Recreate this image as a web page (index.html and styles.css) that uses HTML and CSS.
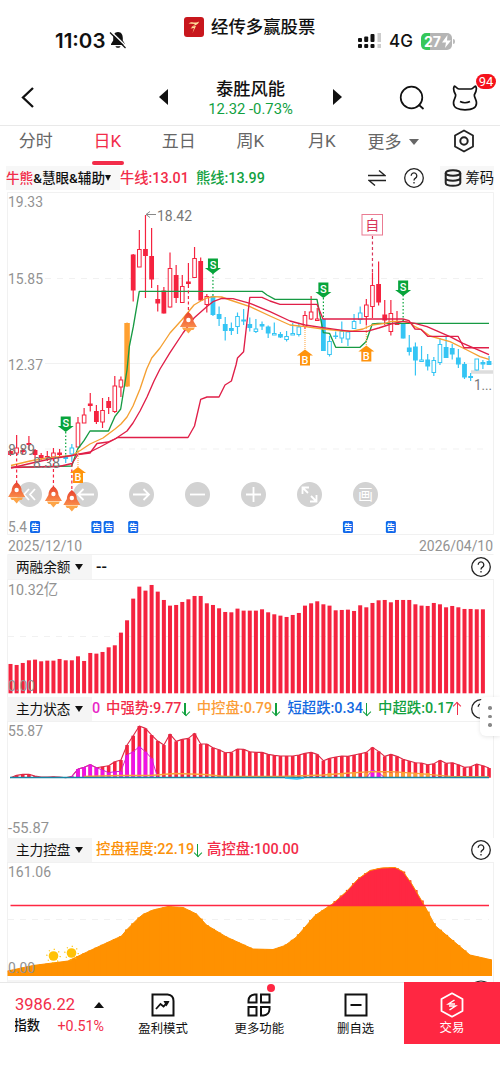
FILE: index.html
```html
<!DOCTYPE html>
<html lang="zh-CN">
<head>
    <meta charset="UTF-8">
    <meta name="viewport" content="width=device-width, initial-scale=1.0">
    <title>泰胜风能</title>
    <link rel="stylesheet" href="styles.css">
</head>
<body>
    <svg width="0" height="0" class="defs">
        <defs>
            <linearGradient id="fire" x1="0" y1="0" x2="0" y2="1">
                <stop offset="0" stop-color="#e8402f"/>
                <stop offset="1" stop-color="#f98a48"/>
            </linearGradient>
            <g id="rocket">
                <path d="M0-11 C4-8 5-5 5-2 L8.500 4 H-8.500 L-5-2 C-5-5-4-8 0-11Z" fill="url(#fire)"/>
                <path d="M-6.500 4.500H6.500L5 7H3L0 10.500L-3 7H-5Z" fill="#fda447"/>
                <circle cy="-3" r="2.200" fill="#fff"/>
            </g>
            <g id="sell">
                <path d="M-5-7.500H5V2H8L0 8L-8 2H-5Z" fill="#07a43b"/>
                <text y="2.500" class="mark">S</text>
            </g>
            <g id="buy">
                <path d="M-5 8H5V-2H8L0-8L-8-2H-5Z" fill="#ff930d"/>
                <text y="6" class="mark">B</text>
            </g>
            <g id="notice">
                <rect x="-5" y="-6" width="10" height="12" rx="1.500" fill="#1268ea"/>
                <text y="3.200" class="notice-text">告</text>
            </g>
            <g id="sun">
                <circle r="4.800" fill="#ffc208"/>
                <circle r="6.700" fill="none" stroke="#ffc208" stroke-width="1.200" stroke-dasharray="1.200 4.060"/>
            </g>
            <g id="help">
                <circle cx="11" cy="11" r="9.300" fill="none" stroke="#222" stroke-width="1.300"/>
                <path d="M8.200 8.700a2.800 2.800 0 1 1 4.300 2.400c-1 .7-1.500 1.100-1.500 2.300M11 15v1.500" fill="none" stroke="#222" stroke-width="1.300"/>
            </g>
        </defs>
    </svg>

    <!-- Status bar -->
    <div class="status-bar">
        <div class="clock">11:03
            <svg width="18" height="18" viewBox="0 0 18 18">
                <path d="M9 1C5.500 1 4.200 4 4.200 7v2.500L2 13v1h14v-1l-2.200-3.500V7C13.800 4 12.500 1 9 1ZM6.500 15.200h5C11 17.200 7 17.200 6.500 15.200Z" fill="#111"/>
                <path d="M2.500 1L18 16" stroke="#fff" stroke-width="1.500"/>
                <path d="M1 1.500L16.500 17" stroke="#111" stroke-width="1.300"/>
            </svg>
        </div>
        <div class="app-name">
            <svg width="20" height="20" viewBox="0 0 20 20">
                <rect width="20" height="20" rx="3" fill="#c8171d"/>
                <path d="M4.500 6.500C8 3.500 11 7 15 4.500C14.500 8 9 9 7.500 9.500L12 9L8.500 16L10 11L6.500 11.500L11 7Z" fill="#ffe09a"/>
            </svg>
            <span>经传多赢股票</span>
        </div>
        <div class="signal">
            <svg width="26" height="18" viewBox="0 0 26 18">
                <g fill="#111">
                    <rect x="1" y="6" width="4" height="4" rx="1"/><rect x="7.200" y="4.500" width="4" height="5.500" rx="1"/><rect x="13.500" y="2" width="4" height="8" rx="1"/>
                    <rect x="1" y="12" width="4" height="4" rx="1"/><rect x="7.200" y="12" width="4" height="4" rx="1"/><rect x="13.500" y="12" width="4" height="4" rx="1"/>
                </g>
                <path d="M20.500 1h3.500v9h-3.500zM20.500 12h3.500v4h-3.500z" fill="#ccc"/>
            </svg>
            <span class="network">4G</span>
            <div class="battery">27<svg width="9" height="13" viewBox="0 0 9 13"><path d="M5.500 0L0 7.500H4L3 13L9 5.500H5Z" fill="#fff"/></svg></div>
        </div>
    </div>

    <!-- Stock header -->
    <div class="header">
        <svg class="back" width="14" height="22" viewBox="0 0 14 22"><path d="M12 2L2 11.500L12 21" fill="none" stroke="#111" stroke-width="2.300"/></svg>
        <svg class="prev" width="9" height="16" viewBox="0 0 9 16"><path d="M9 0V16L0 8Z" fill="#111"/></svg>
        <div class="stock">
            <div class="stock-name">泰胜风能</div>
            <div class="stock-price">12.32 -0.73%</div>
        </div>
        <svg class="next" width="9" height="16" viewBox="0 0 9 16"><path d="M0 0V16L9 8Z" fill="#111"/></svg>
        <svg class="search" width="26" height="26" viewBox="0 0 26 26"><circle cx="12.500" cy="12.500" r="10.800" fill="none" stroke="#111" stroke-width="1.700"/><path d="M19.500 19.500L24.500 24" stroke="#111" stroke-width="1.700"/></svg>
        <div class="robot">
            <svg width="26" height="27" viewBox="0 0 26 27"><path d="M3.500 10.500C1.500 7 1 4 2.500 2C4 2 4.500 5 7 5H19C21.500 5 22 2 23.500 2C25 4 24.500 7 22.500 10.500C21.500 12.500 24.500 15 24.500 19C24.500 24 19 25.800 13 25.800S1.500 24 1.500 19C1.500 15 4.500 12.500 3.500 10.500ZM8 17.500C11 19 15 19 18 17.500" fill="none" stroke="#111" stroke-width="1.700" stroke-linejoin="round"/></svg>
            <span class="badge">94</span>
        </div>
    </div>

    <!-- Period tabs -->
    <div class="tabs">
        <div class="tab">分时</div>
        <div class="tab active">日K</div>
        <div class="tab">五日</div>
        <div class="tab">周K</div>
        <div class="tab">月K</div>
        <div class="tab more">更多<i class="caret"></i></div>
        <svg class="settings" width="22" height="24" viewBox="0 0 22 24"><path d="M11 1.500L20 6.500V17.500L11 22.500L2 17.500V6.500Z" fill="none" stroke="#222" stroke-width="1.800" stroke-linejoin="round"/><circle cx="11" cy="12" r="3.700" fill="none" stroke="#222" stroke-width="2"/></svg>
    </div>

    <!-- Main chart -->
    <div class="main-legend">
        <div class="main-title"><span class="red">牛熊</span>&amp;慧眼&amp;辅助<i class="caret"></i></div>
        <span class="red bull">牛线:13.01</span>
        <span class="green">熊线:13.99</span>
        <svg class="swap" width="18" height="16" viewBox="0 0 18 16"><path d="M0 5.500H17L11 .5M18 10.500H1L7 15.500" fill="none" stroke="#222" stroke-width="1.400"/></svg>
        <svg class="main-help" width="22" height="22"><use href="#help"/></svg>
        <div class="chips">
            <svg width="18" height="18" viewBox="0 0 18 18"><g fill="none" stroke="#222" stroke-width="2"><ellipse cx="9" cy="4" rx="7.300" ry="2.800"/><path d="M1.700 4V14C1.700 17.700 16.300 17.700 16.300 14V4M1.700 9C1.700 12.500 16.300 12.500 16.300 9"/></g></svg>
            筹码
        </div>
    </div>
    <div class="main-chart">
        <svg width="500" height="365" viewBox="0 190 500 365">
            <g class="grid">
                <path d="M7.500 192.500H493.500V534.500H7.500ZM7.500 554.500H493.500M45 363.500H493"/>
                <path d="M45 278.500H489M45 449H489" class="dash"/>
            </g>
            <text x="8" y="207" textLength="35" lengthAdjust="spacingAndGlyphs" class="axis">19.33</text>
            <text x="8" y="284" textLength="35" lengthAdjust="spacingAndGlyphs" class="axis">15.85</text>
            <text x="8" y="370" textLength="35" lengthAdjust="spacingAndGlyphs" class="axis">12.37</text>
            <text x="8" y="532" textLength="19" lengthAdjust="spacingAndGlyphs" class="axis">5.4</text>
            <text x="8" y="551" textLength="74" lengthAdjust="spacingAndGlyphs" class="axis">2025/12/10</text>
            <text x="419" y="551" textLength="74" lengthAdjust="spacingAndGlyphs" class="axis">2026/04/10</text>
            <text x="157" y="221" textLength="35" lengthAdjust="spacingAndGlyphs" class="axis dark">18.42</text>
            <path d="M156 214.500H146M150 211.500L146 214.500L150 217.500" fill="none" stroke="#888"/>
            <path d="M471 372H493" stroke="#ddd" stroke-width="3.500"/>
            <g id="candles"></g>
            <g id="lines"></g>
            <text x="8" y="455" textLength="27" lengthAdjust="spacingAndGlyphs" class="axis dark">8.89</text>
            <text x="33" y="468" textLength="27" lengthAdjust="spacingAndGlyphs" class="axis dark">8.38</text>
            <text x="474" y="390" textLength="18" lengthAdjust="spacingAndGlyphs" class="axis dark">1...</text>
            <g id="stems"></g>
            <rect x="362" y="214.500" width="20.500" height="20.500" fill="#fff" stroke="#ea7b92"/>
            <text x="372.300" y="230" class="self-text">自</text>
        </svg>
        <div class="tools">
            <svg width="25" height="25"><circle cx="12.500" cy="12.500" r="12.500"/><path d="M12 7L7 12.500L12 18M18 7L13 12.500L18 18"/></svg>
            <svg width="25" height="25"><circle cx="12.500" cy="12.500" r="12.500"/><path d="M21 12.500H5M10.500 7L5 12.500L10.500 18"/></svg>
            <svg width="25" height="25"><circle cx="12.500" cy="12.500" r="12.500"/><path d="M4 12.500H20M14.500 7L20 12.500L14.500 18"/></svg>
            <svg width="25" height="25"><circle cx="12.500" cy="12.500" r="12.500"/><path d="M5 12.500H20"/></svg>
            <svg width="25" height="25"><circle cx="12.500" cy="12.500" r="12.500"/><path d="M5 12.500H20M12.500 5V20"/></svg>
            <svg width="25" height="25"><circle cx="12.500" cy="12.500" r="12.500"/><path d="M5.500 12V5.500H12M5.500 5.500L11 11M19.500 13V19.500H13M19.500 19.500L14 14"/></svg>
            <svg width="25" height="25"><circle cx="12.500" cy="12.500" r="12.500"/><text x="12.500" y="18" class="draw-text">画</text></svg>
        </div>
        <svg class="overlay" width="500" height="365" viewBox="0 190 500 365"><g id="marks"></g></svg>
    </div>

    <!-- Indicator panels -->
    <div class="panel">
        <div class="panel-head">
            <div class="panel-title">两融余额<i class="caret"></i></div>
            <div class="values"><span class="none">--</span></div>
            <svg class="help" width="22" height="22"><use href="#help"/></svg>
        </div>
        <svg class="chart" width="500" height="118" viewBox="0 579 500 118">
            <path d="M7.500 579.500H493.500M7.500 579V697M493.500 579V697" class="grid"/>
            <path d="M8 636.500H489" class="grid dash"/>
            <text x="8" y="594.500" textLength="50" lengthAdjust="spacingAndGlyphs" class="axis">10.32亿</text>
            <g id="margin"></g>
            <text x="8" y="691" textLength="27" lengthAdjust="spacingAndGlyphs" class="axis">0.00</text>
        </svg>
    </div>

    <div class="panel">
        <div class="panel-head">
            <div class="panel-title">主力状态<i class="caret"></i></div>
            <div class="values state-values">
                <span class="magenta">0</span>
                <span class="red">中强势:9.77<b class="arrow down"></b></span>
                <span class="orange">中控盘:0.79<b class="arrow down"></b></span>
                <span class="blue">短超跌:0.34<b class="arrow down"></b></span>
                <span class="green">中超跌:0.17<b class="arrow up"></b></span>
            </div>
            <svg class="help" width="22" height="22"><use href="#help"/></svg>
            <div class="side-handle"><i></i><i></i><i></i></div>
        </div>
        <svg class="chart" width="500" height="117" viewBox="0 721 500 117">
            <path d="M7.500 721.500H493.500M7.500 721V838M493.500 721V838" class="grid"/>
            <text x="8" y="736" textLength="35" lengthAdjust="spacingAndGlyphs" class="axis">55.87</text>
            <text x="8" y="832.500" textLength="41" lengthAdjust="spacingAndGlyphs" class="axis">-55.87</text>
            <g id="state"></g>
        </svg>
    </div>

    <div class="panel">
        <div class="panel-head">
            <div class="panel-title">主力控盘<i class="caret"></i></div>
            <div class="values">
                <span class="amber">控盘程度:22.19<b class="arrow down"></b></span>
                <span class="red">高控盘:100.00</span>
            </div>
            <svg class="help" width="22" height="22"><use href="#help"/></svg>
        </div>
        <svg class="chart" width="500" height="120" viewBox="0 862 500 120">
            <path d="M7.500 862.500H493.500M7.500 862V982M493.500 862V982" class="grid"/>
            <path d="M8 919.500H489" class="grid dash"/>
            <text x="8" y="877" textLength="43" lengthAdjust="spacingAndGlyphs" class="axis">161.06</text>
            <g id="control"></g>
            <path d="M10.500 905.500H489" stroke="#ff2742" stroke-width="1.400"/>
            <use href="#sun" x="53.500" y="956"/>
            <use href="#sun" x="71.500" y="953"/>
            <text x="8" y="973" textLength="27" lengthAdjust="spacingAndGlyphs" class="axis">0.00</text>
            <path d="M7.500 980H90V982H7.500Z" fill="#f5f5f5"/>
            <path d="M475 982.500Q481 979.500 487 982.500" fill="none" stroke="#222" stroke-width="1.200"/>
        </svg>
    </div>

    <!-- Bottom bar -->
    <div class="bottom-bar">
        <div class="index">
            <div class="index-row"><span class="index-value">3986.22</span><i class="caret-up"></i></div>
            <div class="index-row"><span class="index-name"><span>指数</span></span><span class="index-change">+0.51%</span></div>
        </div>
        <div class="action">
            <svg width="24" height="24" viewBox="0 0 24 24"><g fill="none" stroke="#111" stroke-width="2"><path d="M1.500 1.500H16.500Q22.500 2 22.500 8V22.500H1.500Z"/><path d="M5 16L9.500 11L12.500 13.500L17 9" stroke-width="1.800"/></g><path d="M12.500 8H18.500L15.500 13.500Z" fill="#111"/></svg>
            <span>盈利模式</span>
        </div>
        <div class="action">
            <svg width="24" height="24" viewBox="0 0 24 24"><g fill="none" stroke="#111" stroke-width="2"><path d="M9.500 1.500V9.500H1.500V7.500Q2 2 7.500 1.500ZM14 1.500H22.500V9.500H14ZM1.500 14H9.500V22.500H1.500ZM14 14H22.500V16.500Q22 22 16.500 22.500H14Z"/></g></svg>
            <span>更多功能</span>
            <i class="dot"></i>
        </div>
        <div class="action">
            <svg width="24" height="24" viewBox="0 0 24 24"><path d="M1.500 1.500H22.500V22.500H1.500ZM6.500 12H17.500" fill="none" stroke="#111" stroke-width="2"/></svg>
            <span>删自选</span>
        </div>
        <div class="action trade">
            <svg width="24" height="26" viewBox="0 0 24 26"><path d="M12 1.300L22.500 7V19L12 24.700L1.500 19V7Z" fill="none" stroke="#fff" stroke-width="1.800" stroke-linejoin="round"/><path d="M14.500 8L8.500 12H15M9.500 18L15.500 14H9" fill="none" stroke="#fff" stroke-width="1.500"/></svg>
            <span>交易</span>
        </div>
    </div>

    <script src="charts.js"></script>
</body>
</html>
```

FILE: styles.css
```css
* {
    box-sizing: border-box;
}
body {
    margin: 0;
    width: 500px;
    height: 1087px;
    overflow: hidden;
    background: #fff;
    color: #111;
    font-family: Roboto, "Noto Sans CJK SC", sans-serif;
}
svg {
    display: block;
    flex: none;
}
.defs {
    position: absolute;
}
.red { color: #f22c49; }
.green { color: #12a13f; }
.orange { color: #fb9d38; }
.amber { color: #fb9109; }
.blue { color: #1268e0; }
.magenta { color: #e827c6; }
.caret {
    border: 4px solid transparent;
    border-top: 6px solid #111;
    border-bottom: 0;
}

/* Status bar */
.status-bar {
    height: 68px;
    display: flex;
    padding: 13px 43px 0 55px;
}
.clock {
    width: 129px;
    padding-top: 16px;
    display: flex;
    gap: 4px;
    font: 600 20.5px/24px Inter, sans-serif;
}
.clock svg {
    margin-top: 2px;
}
.app-name {
    width: 173px;
    height: 28px;
    display: flex;
    align-items: center;
    gap: 7px;
    font-size: 17.4px;
    line-height: 28px;
    font-weight: 500;
    white-space: nowrap;
}
.signal {
    display: flex;
    height: 24px;
    margin-top: 16px;
    align-items: center;
}
.network {
    width: 32px;
    margin-left: 6px;
    font: 500 17px/24px Inter, sans-serif;
}
.battery {
    position: relative;
    width: 31px;
    height: 17px;
    padding-left: 3px;
    display: flex;
    align-items: center;
    gap: 1px;
    border-radius: 5px;
    color: #fff;
    background: linear-gradient(90deg, #35c759 9px, #b5b5b5 9px);
    font: 700 14px/17px Inter, sans-serif;
}
.battery::after {
    content: "";
    position: absolute;
    right: -3px;
    top: 6px;
    width: 2px;
    height: 5px;
    border-radius: 0 2px 2px 0;
    background: #bbb;
}

/* Stock header */
.header {
    height: 58px;
    display: flex;
    border-bottom: 1px solid #e9e9e9;
}
.back {
    margin: 18px 0 0 21px;
}
.prev {
    margin: 21px 0 0 124px;
}
.stock {
    width: 165px;
    text-align: center;
}
.stock-name {
    margin-top: 8px;
    font-size: 17.3px;
    line-height: 26px;
    font-weight: 500;
}
.stock-price {
    font-size: 14.8px;
    line-height: 15px;
    color: #12a13f;
}
.next {
    margin-top: 21px;
}
.search {
    margin: 17px 0 0 57px;
}
.robot {
    position: relative;
    margin: 16px 0 0 27px;
}
.badge {
    position: absolute;
    left: 24px;
    top: -10px;
    width: 20px;
    border-radius: 8px;
    background: #f5121b;
    color: #fff;
    font-size: 13px;
    line-height: 15px;
    text-align: center;
}

/* Tabs */
.tabs {
    height: 39px;
    display: flex;
}
.tab {
    position: relative;
    width: 71.5px;
    text-align: center;
    color: #666;
    font-size: 17px;
    line-height: 31px;
}
.tab.active {
    color: #f22c49;
}
.tab.active::after {
    content: "";
    position: absolute;
    left: 20px;
    bottom: 0;
    width: 32px;
    height: 4px;
    border-radius: 2px;
    background: #f22c49;
}
.tab.more {
    width: 84px;
    padding-left: 10px;
    display: flex;
    align-items: center;
    height: 32px;
}
.more .caret {
    margin-left: 7px;
    border-width: 6px 5px 0;
    border-top-color: #666;
}
.settings {
    margin: 3px 0 0 11px;
}

/* Main chart */
.main-legend {
    height: 25px;
    padding-left: 6px;
    display: flex;
    align-items: center;
    font-size: 14.3px;
    line-height: 24px;
    white-space: nowrap;
}
.main-title {
    width: 114px;
    display: flex;
    align-items: center;
    font-size: 13.6px;
    font-weight: 500;
    background: #f7f7f7;
}
.main-title .caret {
    border-width: 6px 3.5px 0;
}
.bull {
    width: 76px;
}
.bull, .bull + .green {
    font-weight: 500;
}
.swap {
    position: absolute;
    left: 368px;
}
.main-help {
    position: absolute;
    left: 403px;
}
.chips {
    margin-left: auto;
    margin-right: 6px;
    padding-left: 4px;
    height: 24px;
    display: flex;
    align-items: center;
    gap: 3px;
    background: #f7f7f7;
}
.main-chart {
    position: relative;
}
.overlay {
    position: absolute;
    left: 0;
    top: 0;
}
.grid {
    fill: none;
    stroke: #f1f1f1;
}
.dash {
    stroke-dasharray: 6 6;
}
.axis {
    font-size: 15.5px;
    fill: #929292;
}
.axis.dark {
    fill: #777;
}
.mark {
    font: 500 11px Roboto, sans-serif;
    text-anchor: middle;
    fill: #fff;
}
.notice-text {
    font-size: 8.5px;
    font-weight: 700;
    text-anchor: middle;
    fill: #fff;
}
.self-text {
    font-size: 14px;
    text-anchor: middle;
    fill: #d8365a;
}
.tools {
    position: absolute;
    left: 17px;
    top: 292px;
    display: flex;
    gap: 31px;
    opacity: 0.75;
}
.tools circle {
    fill: #c3c3c3;
}
.tools path {
    fill: none;
    stroke: #fff;
    stroke-width: 1.8;
}
.draw-text {
    fill: #fff;
    font-size: 15px;
    text-anchor: middle;
}

/* Panels */
.panel-head {
    position: relative;
    height: 24px;
    padding-left: 7px;
    display: flex;
    font-size: 14.4px;
    line-height: 24px;
    white-space: nowrap;
}
.panel-title {
    width: 85px;
    padding-left: 9px;
    display: flex;
    align-items: center;
    gap: 5px;
    background: #f5f5f5;
    font-size: 13.6px;
}
.values {
    display: flex;
    gap: 6px;
    padding-left: 4px;
    padding-top: 1px;
    font-weight: 500;
}
.none {
    font-size: 16px;
}
.state-values {
    padding-left: 0;
}
.state-values span {
    width: 84.7px;
}
.state-values .magenta {
    width: 8px;
}
.values span {
    display: flex;
    align-items: center;
    height: 22px;
}
.arrow {
    position: relative;
    width: 7px;
    height: 12px;
    margin-left: 0;
}
.arrow::before {
    content: "";
    position: absolute;
    left: 2.8px;
    top: 0;
    width: 1.5px;
    height: 12px;
    background: currentColor;
}
.arrow::after {
    content: "";
    position: absolute;
    left: 1px;
    top: 6px;
    width: 5px;
    height: 5px;
    border: solid currentColor;
    border-width: 0 1.5px 1.5px 0;
    transform: rotate(45deg);
}
.arrow.down {
    color: #12a13f;
}
.arrow.up {
    color: #f22c49;
    transform: rotate(180deg);
}
.help {
    position: absolute;
    left: 470px;
    top: 1px;
}
.side-handle {
    position: absolute;
    left: 480px;
    top: 0;
    z-index: 1;
    width: 20px;
    height: 39px;
    border-radius: 6px 0 0 6px;
    background: #fff;
    box-shadow: 0 1px 4px rgba(0, 0, 0, 0.1);
    display: flex;
    flex-direction: column;
    align-items: center;
    justify-content: center;
    gap: 5px;
}
.side-handle i {
    width: 3.5px;
    height: 3.5px;
    border-radius: 50%;
    background: #888;
}

/* Bottom bar */
.bottom-bar {
    height: 62px;
    display: flex;
    border-top: 1px solid #e8e8e8;
}
.index {
    width: 115px;
    padding: 11px 11px 0 15px;
}
.index-row {
    display: flex;
    justify-content: space-between;
    align-items: center;
    height: 21px;
}
.index-value {
    font-size: 16.5px;
    color: #f22c49;
}
.caret-up {
    border: 5px solid transparent;
    border-top: 0;
    border-bottom: 6px solid #111;
}
.index-name {
    width: 25px;
    overflow: hidden;
    display: flex;
    justify-content: flex-end;
    white-space: nowrap;
    font-size: 13.3px;
    line-height: 21px;
    font-weight: 500;
}
.index-change {
    color: #f22c49;
    font-size: 14.3px;
}
.action {
    position: relative;
    width: 96.3px;
    padding-top: 10px;
    display: flex;
    flex-direction: column;
    align-items: center;
    font-size: 12.4px;
    line-height: 23px;
}
.dot {
    position: absolute;
    left: 56px;
    top: 1px;
    width: 8px;
    height: 8px;
    border-radius: 50%;
    background: #ff2742;
}
.trade {
    height: 62px;
    margin-top: -1px;
    background: #ff2742;
    color: #fff;
}
.trade span {
    line-height: 20px;
}
```

FILE: charts.js
```js
const RED = '#f5233f';
const BLUE = '#35c5f4';
const x = i => 10.5 + i * 6.135;

function draw(id, markup) {
    document.getElementById(id).innerHTML = markup;
}

function line(points, color, width = 1.35) {
    return `<polyline points="${points}" fill="none" stroke="${color}" stroke-width="${width}" stroke-linejoin="round"/>`;
}

// [high, low, body top, body bottom, style]
// r / c = filled red / cyan, R / C = hollow, o = filled orange
const candles = [
    [450, 456, 451, 455, 'r'], [435, 453, 448, 453, 'R'], [448, 454, 450, 452, 'r'], [436, 450, 443, 445, 'r'],
    [449, 458, 450, 455, 'r'], [453, 460, 455, 458, 'r'], [451, 461, 456, 457.5, 'r'], [448, 459, 453, 457, 'R'],
    [449, 457, 452.5, 455, 'r'], [455, 463, 457, 459, 'c'], [444, 462, 448, 454, 'C'], [417, 447, 423, 447, 'R'],
    [408, 423, 415, 423, 'R'], [393, 411.5, 403.5, 406, 'r'], [405, 424, 411, 422, 'r'], [398, 428, 410.5, 422, 'R'],
    [397, 414, 401, 408, 'r'], [376, 413, 386, 411.5, 'R'], [376.5, 397, 380, 387, 'R'], [322.5, 387, 323, 386.5, 'o'],
    [254, 301.5, 254.5, 290.5, 'r'], [230, 267, 249.5, 267, 'R'], [215, 298, 249, 256, 'r'], [228, 288, 256, 279.5, 'r'],
    [285, 311.5, 299, 303.5, 'r'], [287, 313.5, 290.5, 313.5, 'r'], [252.5, 307.5, 268.5, 307, 'R'], [265, 303, 275, 298, 'r'],
    [275, 302.5, 286.5, 302.5, 'R'], [263, 285, 281.5, 284, 'r'], [247, 278, 258.5, 277.5, 'R'], [257.5, 301, 261, 300.5, 'r'],
    [294, 312.5, 296.5, 304.5, 'R'], [295, 316, 296, 315, 'c'], [306.5, 326, 314, 319, 'c'], [317, 340.5, 324, 331, 'c'],
    [322.5, 335, 328, 331, 'c'], [312.5, 334, 316.5, 326.5, 'C'], [309, 325, 319.5, 321.5, 'c'], [317.5, 331.5, 324, 328, 'c'],
    [319, 333, 329, 331.5, 'C'], [321.5, 330, 324, 326.5, 'c'], [325.5, 338, 326.5, 333.5, 'c'], [322.5, 335, 333.5, 335, 'C'],
    [332, 338, 334, 337.5, 'c'], [331, 341.5, 336.5, 339.5, 'C'], [323, 335, 333.5, 335, 'C'], [323, 336.5, 327, 334.5, 'C'],
    [311, 329, 315.5, 326.5, 'R'], [296, 320, 312, 319, 'R'], [308, 321, 319, 320.5, 'R'], [319, 351, 319, 351, 'c'],
    [336, 356.5, 341.5, 354.5, 'C'], [331.5, 339, 335.5, 337, 'c'], [321.5, 343, 331.5, 338, 'C'], [330, 346, 332, 339, 'C'],
    [314, 329, 321.5, 328.5, 'C'], [306.5, 324, 313, 319.5, 'C'], [299, 325.5, 305, 316.5, 'R'], [272.5, 318, 285.5, 306.5, 'R'],
    [261.5, 305.5, 284, 302.5, 'r'], [300, 325, 314.5, 320.5, 'r'], [300, 335.5, 313.5, 331.5, 'R'], [311, 325, 323, 325, 'r'],
    [323.5, 338.5, 323.5, 338.5, 'c'], [335, 355.5, 347.5, 352, 'c'], [342.5, 375.5, 346.5, 360.5, 'c'], [346, 361.5, 360, 361.5, 'C'],
    [354, 370.5, 359.5, 366.5, 'c'], [357, 376, 360.5, 372.5, 'C'], [338, 365, 344.5, 362.5, 'C'], [336.5, 358, 347, 358, 'c'],
    [344, 359.5, 348, 354.5, 'c'], [349, 368, 357.5, 364.5, 'c'], [362, 379, 364, 377.5, 'c'], [373, 381, 376, 378, 'c'],
    [359, 370.5, 359, 370, 'C'], [360, 369, 362, 364.5, 'c'], [356, 365, 361, 365, 'c']
];

draw('candles', candles.map(([high, low, top, bottom, type], i) => {
    const color = type === 'o' ? '#ffa031' : type.toLowerCase() === 'r' ? RED : BLUE;
    const hollow = type === 'R' || type === 'C';
    const w = hollow ? 3.6 : type === 'o' ? 5.5 : 4.8;
    return `<path d="M${x(i)} ${high}V${low}" stroke="${color}" stroke-width="1.2"/>
        <rect x="${x(i) - w / 2}" y="${top}" width="${w}" height="${bottom - top}" fill="${hollow ? '#fff' : color}" stroke="${hollow ? color : 'none'}"/>`;
}).join(''));

const green = '11,467.3 71.7,466 77.7,449 84,440.7 90,431 108.5,431 114.8,416.7 120.7,409 127,370 129.3,346.7 133.3,326.7 139.3,291.3 262,291.3 267,295 275,299.3 317,299.3 323.3,332.7 329.5,333.3 335.7,347.3 360,347.3 366,341.7 372.3,324 378,323.3 489,323.3';
const orange = '11,465.5 30,461 47,458 72,455.5 81,450 90,444 103,438 115,429 121,424 127,417 133,406 140,389 146.7,369 151.7,358 160,348 170,333 181.7,320 194,305 200.7,301 206.7,298 213,296.7 221.7,297 230,300 250,306.7 270,316 290,325 305,326.7 323,329 343,331 353,331 363,329 372,325 385,323.3 391,321.3 403,321.3 410,322.7 415,326.7 421.7,330 430,336 450,341.7 467,350 480,356.7 489,359.3';
const average = '11,468 30,463.5 50,459 72,455.5 90,452 100,447 115,439 127,431 133,423 140,411 147,397 154,381 160,369 170,352.7 183,333 194,318 206.7,306.7 213,301.7 221.7,298.3 233,298.7 250,303.3 270,311.7 290,321 305,325 323,327.7 350,331.3 367,331.3 378.7,328 385,326 391,324 403,321.3 415,323.3 427,326.7 450,336.7 463,343.3 489,354.7';
const steps = '11,467.5 59,466.5 72,463.5 78,454.5 90,453 97,443.5 108,442 118,437.5 188,437.5 194.5,426 200.7,399.3 207,397 219,397 225,385 231.4,381 236,365 237.5,358 243.6,351.7 249.8,297.3 262,297.3 270,301 280,304.3 317,304.3 323,319 403,319 409,320.7 415,329 421,329.3 427.7,336.3 458,336.3 464,347.7 489,347.7';

draw('lines', line(green, '#179a43') + line(orange, '#f5a032') + line(average, '#e01f48') + line(steps, '#e01f48'));

const stems = [
    [1, 453, 485, RED], [7, 458, 488, RED], [10, 464, 492, RED], [29, 285, 315, RED], [59, 236, 272, '#d8365a'],
    [9, 432, 457, '#07a43b'], [33, 273, 296, '#07a43b'], [51, 298, 319, '#07a43b'], [64, 295, 323, '#07a43b'],
    [11, 450, 468, '#ffb35d'], [48, 330, 350, '#ffb35d'], [58, 326, 346, '#ffb35d']
];
const dash = color => color === '#07a43b' ? '1.5 2' : color === '#ffb35d' ? '1 1' : '3 2.5';
draw('stems', stems.map(([i, top, bottom, color]) =>
    `<path d="M${x(i)} ${top}V${bottom}" stroke="${color}" stroke-width="1.2" stroke-dasharray="${dash(color)}"/>`
).join(''));

const marks = [
    ['rocket', 1, 493], ['rocket', 7, 497], ['rocket', 10, 501], ['rocket', 29, 323],
    ['sell', 9, 424], ['sell', 33, 266], ['sell', 51, 290], ['sell', 64, 288],
    ['buy', 11, 475], ['buy', 48, 357.5], ['buy', 58, 353.5],
    ['notice', 4, 527], ['notice', 14, 527], ['notice', 16, 527], ['notice', 20, 527], ['notice', 55, 527], ['notice', 62, 527]
];
draw('marks', marks.map(([name, i, y]) => `<use href="#${name}" x="${x(i)}" y="${y}"/>`).join(''));

// Margin balance
const margin = [
    88, 85, 91, 99, 101, 96, 98, 98, 103, 99, 99, 111, 97, 121, 119, 124, 138, 144, 182, 219,
    284, 320, 308, 325, 305, 280, 263, 265, 274, 282, 292, 292, 270, 265, 255, 244, 243, 254, 248, 248,
    248, 252, 243, 237, 233, 229, 235, 241, 263, 270, 276, 267, 263, 249, 250, 251, 247, 264, 258, 271,
    279, 280, 273, 280, 280, 280, 267, 263, 262, 271, 267, 258, 262, 258, 253, 253, 252, 252
];
draw('margin', margin.map((v, i) =>
    `<rect x="${x(i) - 2}" y="${693.3 - v / 3}" width="4" height="${v / 3}" fill="${RED}"/>`
).join(''));

// Main force state
const strong = [
    0, 7, 10, 10, 5, 2, 2, 3, 2, 0, 4, 26, 31, 39, 30, 33, 36, 48, 53, 98,
    126, 155, 148, 128, 110, 98, 131, 109, 115, 118, 133, 101, 101, 90, 84, 75, 76, 86, 85, 78,
    76, 76, 70, 67, 65, 65, 65, 68, 73, 76, 70, 51, 58, 62, 65, 64, 68, 72, 76, 91,
    79, 64, 70, 64, 55, 50, 45, 44, 39, 42, 52, 43, 45, 39, 31, 33, 41, 36, 29
];
const rise = { 10: 4, 11: 26, 12: 31, 13: 39, 14: 30, 15: 23, 16: 15, 17: 18, 18: 19, 19: 68, 20: 78, 21: 93, 22: 78, 23: 58, 24: 0, 58: 0, 59: 23, 60: 15, 61: 0 };
const base = 777.7;
const bar = (i, v, color) => `<rect x="${x(i) - 1.8}" y="${base - v / 3}" width="3.6" height="${v / 3}" fill="${color}"/>`;
const curve = keys => keys.map(i => `${x(i)},${base - rise[i] / 3}`).join(' ');
const riseKeys = Object.keys(rise).map(Number);

draw('state',
    strong.map((v, i) => bar(i, v, RED)).join('') +
    line(strong.map((v, i) => `${x(i)},${base - v / 3}`).join(' '), '#dc2a45', 1.1) +
    [52, 54, 56, 58, 60, 61, 62, 63, 64, 65, 66, 67, 68].map(i => bar(i, 14, '#ffa031')).join('') +
    riseKeys.map(i => bar(i, rise[i], '#ee13e8')).join('') +
    line(curve(riseKeys.filter(i => i < 30)), '#d51bd5', 1) +
    line(curve(riseKeys.filter(i => i > 30)), '#d51bd5', 1) +
    line('84,776.5 120,775.5 150,775.5 175,773.5 205,774.5 225,776.5 280,776.5 323,775 350,773 372,771.7 391,771.7 417,773.3 450,776.3 489,776.8', '#f9a13a') +
    line('10,777.5 489,777.5', '#1685a3', 1.5) +
    line('285,778 297,779 304,778', BLUE)
);

// Main force control
const control = [
    [7.5, 971], [33, 965.5], [68, 961], [88, 951.5], [121.5, 936], [126.5, 930], [138, 918.5], [143, 914.5],
    [153, 910], [168, 906.5], [183, 907.5], [196.5, 914], [206.5, 925], [226.5, 937], [253, 949], [273, 949.5],
    [285, 945.5], [296.5, 937], [315, 915.5], [333, 903.5], [346.5, 891.5], [358, 879], [370, 870.5], [381.5, 868],
    [395, 867.5], [403, 871.5], [411.5, 883.5], [418, 894.5], [425, 906.5], [435, 925.5], [448, 936.5], [470, 955], [492, 960]
];
function levelAt(px) {
    const n = control.findIndex(p => p[0] >= px);
    if (n < 1) return control[0][1];
    const [x0, y0] = control[n - 1];
    const [x1, y1] = control[n];
    return y0 + (y1 - y0) * (px - x0) / (x1 - x0);
}
const area = `<path d="M7.500 976L${control.join(' L')}L492 976Z"/>` +
    Array.from({ length: 79 }, (_, i) => `<rect x="${x(i) - 2}" y="${levelAt(x(i))}" width="4" height="${976 - levelAt(x(i))}"/>`).join('');
draw('control', `
    <clipPath id="above"><rect x="0" y="860" width="500" height="46"/></clipPath>
    <g fill="#ff9100">${area}</g>
    <g fill="#ff2742" clip-path="url(#above)">${area}</g>
    ${line(control.join(' '), '#ff9100', 1)}
`);
```
